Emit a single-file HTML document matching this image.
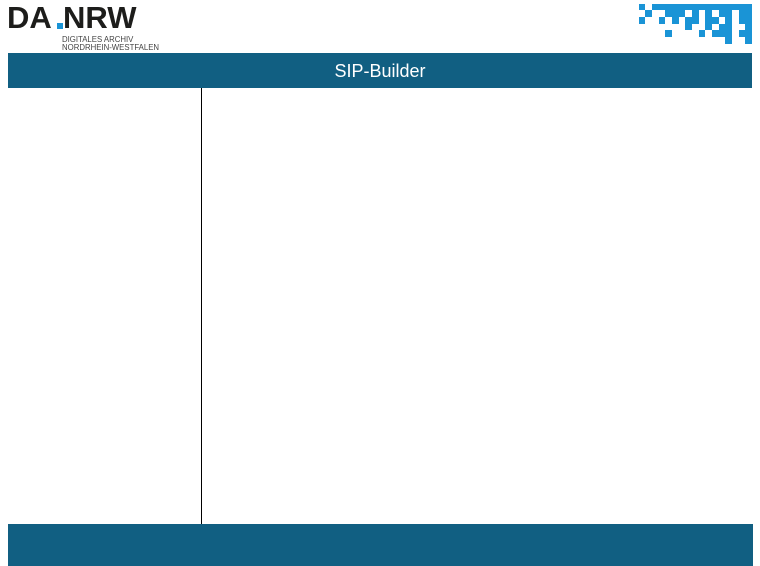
<!DOCTYPE html>
<html><head><meta charset="utf-8"><style>
body{margin:0;width:760px;height:566px;background:#fff;position:relative;overflow:hidden;font-family:"Liberation Sans",sans-serif}
.a{position:absolute}
.bar{background:#115f82;left:8px;width:744px}
.px{position:absolute;width:6.7px;height:6.7px;background:#1a94d6}
</style></head><body>
<div class="a" style="left:7px;top:1px;font-weight:bold;font-size:31px;line-height:34px;color:#1d1d1b;letter-spacing:0">DA</div>
<div class="a" style="left:57px;top:23px;width:6px;height:6px;background:#1a94d6"></div>
<div class="a" style="left:63px;top:1px;font-weight:bold;font-size:31px;line-height:34px;color:#1d1d1b">NRW</div>
<div class="a" style="left:62px;top:36px;font-size:7.8px;line-height:8px;color:#444">DIGITALES ARCHIV<br>NORDRHEIN-WESTFALEN</div>
<div id="pix" class="a" style="left:638.7px;top:3.7px"></div>
<div class="a bar" style="top:53px;height:35px;color:#fff;font-size:18px;text-align:center;line-height:37px">SIP-Builder</div>
<div class="a" style="left:201px;top:88px;width:1px;height:436px;background:#000"></div>
<div class="a bar" style="top:524px;height:42px;width:745px"></div>
<script>
var rows=[[0,2,3,4,5,6,7,8,9,10,11,12,13,14,15,16],[1,4,5,6,8,10,12,13,15,16],[0,3,5,7,8,10,11,13,15,16],[7,10,12,13,16],[4,9,11,12,13,15,16],[13,16]];
var p=document.getElementById('pix'),h='';
rows.forEach(function(r,i){r.forEach(function(c){h+='<div class="px" style="left:'+(c*6.67)+'px;top:'+(i*6.67)+'px"></div>';});});
p.innerHTML=h;
</script>
</body></html>
